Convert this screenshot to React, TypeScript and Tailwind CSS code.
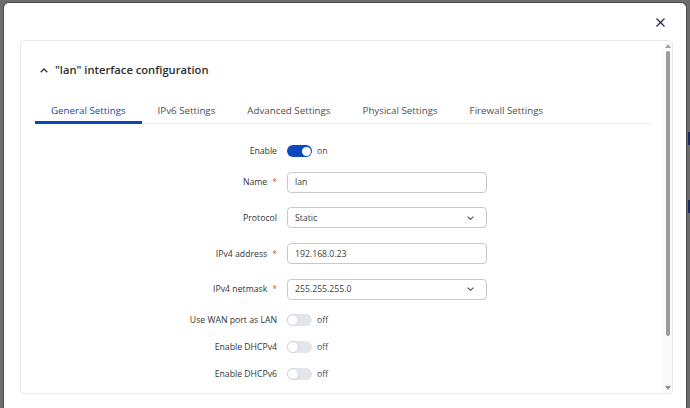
import React from 'react';

const tabs = ['General Settings', 'IPv6 Settings', 'Advanced Settings', 'Physical Settings', 'Firewall Settings'];

const Toggle = ({ on }: { on: boolean }) => (
  <div className="flex h-[12px] items-center">
    {on ? (
      <div className="flex h-[12px] w-[25px] items-center justify-end rounded-full bg-[#0b49bd] pr-[1.5px]">
        <div className="h-[9px] w-[9px] rounded-full bg-white" />
      </div>
    ) : (
      <div className="flex h-[12px] w-[25px] items-center rounded-full bg-[#e2e6eb]">
        <div className="h-[12px] w-[12px] rounded-full border border-[#cfd3d9] bg-white" />
      </div>
    )}
    <span className="ml-[5px] text-[8.7px] leading-[12px] text-[#4a4a4a]">{on ? 'on' : 'off'}</span>
  </div>
);

const Label = ({ text, required }: { text: string; required?: boolean }) => (
  <div className="w-[242px] shrink-0 text-right text-[8.7px] leading-[12px] text-[#333]">
    {text}
    {required && <span className="ml-[5px] text-[#e5533d]">*</span>}
  </div>
);

const Chevron = () => (
  <svg width="7" height="4" viewBox="0 0 7 4" fill="none">
    <polyline points="0.6,0.6 3.5,3.3 6.4,0.6" stroke="#4a4a4a" strokeWidth="1.1" />
  </svg>
);

const TextField = ({ value, select }: { value: string; select?: boolean }) => (
  <div className="flex h-[21px] w-[200px] items-center justify-between rounded-[4px] border border-[#c5c9d0] bg-white pl-[7px] pr-[12px] text-[8.7px] leading-[12px] text-[#3d3d3d]">
    <span>{value}</span>
    {select && <Chevron />}
  </div>
);

const Row = ({ children, label, required }: { children: React.ReactNode; label: string; required?: boolean }) => (
  <div className="flex items-center">
    <Label text={label} required={required} />
    <div className="ml-[10px]">{children}</div>
  </div>
);

const App = () => {
  return (
    <div className="flex h-[408px] w-[690px] overflow-hidden bg-[#6c6c6c] pl-[3px] pt-[2px] font-['Open_Sans',sans-serif]">
      <div className="flex flex-1 flex-col rounded-t-[6px] border-l border-r border-t border-[#4c4c4c] bg-white">
        {/* close button */}
        <div className="flex h-[37px] shrink-0 items-center justify-end pr-[21px] pt-[2px]">
          <svg width="9" height="9" viewBox="0 0 9 9">
            <line x1="0.5" y1="0.5" x2="8.5" y2="8.5" stroke="#26314d" strokeWidth="1.2" />
            <line x1="8.5" y1="0.5" x2="0.5" y2="8.5" stroke="#26314d" strokeWidth="1.2" />
          </svg>
        </div>

        <div className="ml-[16px] mr-[13px] flex h-[354px] shrink-0 overflow-hidden rounded-[4px] border border-[#e7e9ed]">
          <div className="flex flex-1 flex-col pl-[14px] pr-[12px]">
            {/* section header */}
            <div className="mt-[20px] flex h-[18px] items-center pl-[5px]">
              <svg width="8" height="5" viewBox="0 0 8 5" fill="none">
                <polyline points="0.7,4.3 4,1 7.3,4.3" stroke="#333" strokeWidth="1.3" />
              </svg>
              <span className="ml-[7px] text-[11.2px] font-semibold text-[#2e2e2e]">"lan" interface configuration</span>
            </div>

            {/* tabs */}
            <div className="mt-[21px] flex border-b border-[#eceef1]">
              {tabs.map((t, i) => (
                <div
                  key={t}
                  className={
                    i === 0
                      ? '-mb-px flex h-[24px] items-start border-b-[3px] border-[#0a47b8] px-[16px] pt-[4px] text-[9.75px] text-[#1448b0]'
                      : 'flex h-[23px] items-start px-[16px] pt-[4px] text-[9.75px] text-[#4f4f4f]'
                  }
                >
                  {t}
                </div>
              ))}
            </div>

            {/* form */}
            <div className="flex flex-col gap-[14.7px] pt-[21px]">
              <Row label="Enable">
                <Toggle on />
              </Row>
              <Row label="Name" required>
                <TextField value="lan" />
              </Row>
              <Row label="Protocol">
                <TextField value="Static" select />
              </Row>
              <Row label="IPv4 address" required>
                <TextField value="192.168.0.23" />
              </Row>
              <Row label="IPv4 netmask" required>
                <TextField value="255.255.255.0" select />
              </Row>
              <Row label="Use WAN port as LAN">
                <Toggle on={false} />
              </Row>
              <Row label="Enable DHCPv4">
                <Toggle on={false} />
              </Row>
              <Row label="Enable DHCPv6">
                <Toggle on={false} />
              </Row>
            </div>
          </div>

          {/* scrollbar */}
          <div className="flex w-[9px] shrink-0 flex-col items-center bg-[#fafafa] pb-[3px] pt-[3px]">
            <div className="h-0 w-0 border-x-[3px] border-b-[4px] border-x-transparent border-b-[#a3a3a3]" />
            <div className="mt-[3px] h-[285px] w-[4px] rounded-full bg-[#9b9b9b]" />
            <div className="flex-1" />
            <div className="h-0 w-0 border-x-[3px] border-t-[4px] border-x-transparent border-t-[#8f8f8f]" />
          </div>
        </div>
      </div>

      {/* page behind the modal */}
      <div className="flex w-[3px] shrink-0 flex-col pl-[1px]">
        <div className="mt-[130px] h-[13px] bg-[#1c2a5c]" />
        <div className="mt-[55px] h-[13px] bg-[#1c2a5c]" />
      </div>
    </div>
  );
};

export default App;
